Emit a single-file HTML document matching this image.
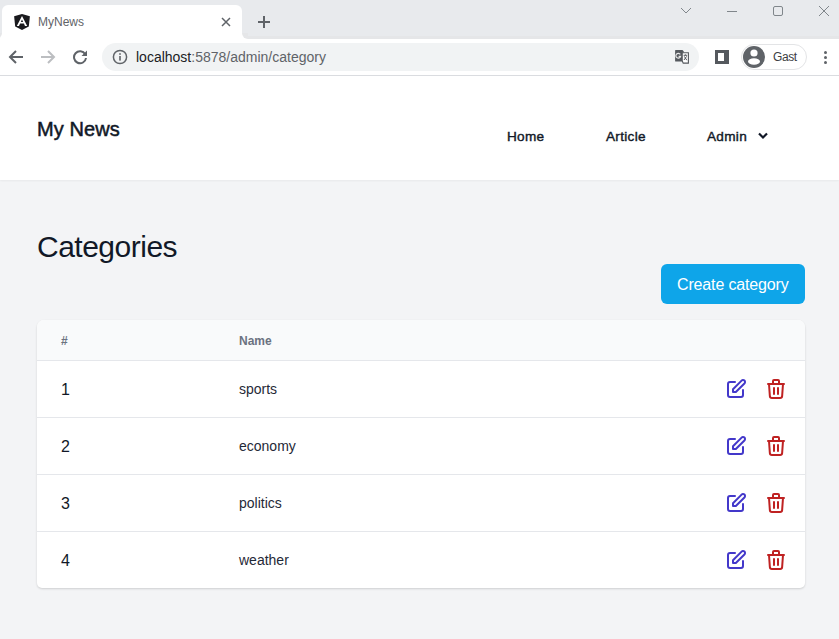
<!DOCTYPE html>
<html><head><meta charset="utf-8">
<style>
*{margin:0;padding:0;box-sizing:border-box}
html,body{width:839px;height:639px;overflow:hidden;background:#f3f4f6;font-family:"Liberation Sans",sans-serif;position:relative}
.abs{position:absolute}
#tabstrip{left:0;top:0;width:839px;height:39px;background:#e8eaed}
#tab{left:2px;top:5px;width:240px;height:34px;background:#fff;border-radius:6px 6px 0 0}
.foot{width:6px;height:6px;background:#fff;top:33px}
.foot i{position:absolute;left:0;top:0;width:6px;height:6px;background:#e5e6e8}
#toolbar{left:0;top:39px;width:839px;height:36px;background:#fff}
#tbline{left:0;top:75px;width:839px;height:1px;background:#dadce0}
#omni{left:102px;top:43px;width:597px;height:28px;border-radius:14px;background:#f1f3f4}
.t{white-space:nowrap;line-height:1}
#header{left:0;top:76px;width:839px;height:104px;background:#fff;box-shadow:0 1px 2px rgba(0,0,0,.05)}
#card{left:37px;top:320px;width:768px;height:268px;background:#fff;border-radius:7px 7px 5px 5px;box-shadow:0 1px 2px rgba(0,0,0,.1),0 1px 3px rgba(0,0,0,.06);overflow:hidden}
#thead{left:0;top:0;width:768px;height:41px;background:#f9fafb;border-bottom:1px solid #e5e7eb}
.row{left:0;width:768px;height:57px;border-top:1px solid #e5e7eb}
#btn{left:661px;top:264px;width:144px;height:40px;background:#0ea5e9;border-radius:6px}
</style></head>
<body>
<div id="tabstrip" class="abs"></div>
<div class="abs" style="left:0;top:36px;width:839px;height:3px;background:#e5e6e8"></div>
<div id="tab" class="abs"></div>
<div class="abs foot" style="left:-4px"><i style="border-radius:0 0 6px 0"></i></div>
<div class="abs foot" style="left:242px"><i style="border-radius:0 0 0 6px"></i></div>
<div id="toolbar" class="abs"></div>
<div id="tbline" class="abs"></div>
<div id="omni" class="abs"></div>

<!-- tab content -->
<svg class="abs" style="left:10px;top:10px" width="24" height="24" viewBox="0 0 24 24">
  <path d="M12 3.9L19.9 6.2L18.8 16.5L12 19.9L5.2 16.5L4.1 6.2Z" fill="#1a1a1e"/>
  <path d="M12 5.9L17.2 16.1H15L13.9 13.6H10.1L9 16.1H6.8Z M12 9.6L13.1 12.1H10.9Z" fill="#fff" fill-rule="evenodd"/>
</svg>
<div class="abs t" style="left:38px;top:16px;font-size:12px;color:#5f6368">MyNews</div>
<svg class="abs" style="left:220px;top:16px" width="12" height="12" viewBox="0 0 12 12"><path d="M2 2L10 10M10 2L2 10" stroke="#5f6368" stroke-width="1.5"/></svg>
<svg class="abs" style="left:256px;top:14px" width="16" height="16" viewBox="0 0 16 16"><path d="M8 2V14M2 8H14" stroke="#5f6368" stroke-width="2"/></svg>

<!-- window controls -->
<svg class="abs" style="left:678px;top:4px" width="16" height="14" viewBox="0 0 16 14"><path d="M3 4L8 9L13 4" stroke="#80868b" stroke-width="1" fill="none"/></svg>
<div class="abs" style="left:727px;top:11px;width:10px;height:1px;background:#80868b"></div>
<div class="abs" style="left:773px;top:6px;width:10px;height:10px;border:1px solid #80868b;border-radius:2px"></div>
<svg class="abs" style="left:818px;top:5px" width="12" height="12" viewBox="0 0 12 12"><path d="M1 1L11 11M11 1L1 11" stroke="#80868b" stroke-width="1"/></svg>

<!-- toolbar icons -->
<svg class="abs" style="left:8px;top:49px" width="16" height="16" viewBox="0 0 16 16"><path d="M15 8H2.5M8 2L2 8L8 14" stroke="#5f6368" stroke-width="2" fill="none"/></svg>
<svg class="abs" style="left:40px;top:49px" width="16" height="16" viewBox="0 0 16 16"><path d="M1 8H13.5M8 2L14 8L8 14" stroke="#bcbec1" stroke-width="2" fill="none"/></svg>
<svg class="abs" style="left:72px;top:49px" width="16" height="16" viewBox="0 0 16 16"><path d="M13.2 5.2A6 6 0 1 0 14 9" stroke="#5f6368" stroke-width="2" fill="none"/><path d="M15 1.5V7H9.5Z" fill="#5f6368"/></svg>
<svg class="abs" style="left:112px;top:49px" width="16" height="16" viewBox="0 0 16 16"><circle cx="8" cy="8" r="6.6" stroke="#5f6368" stroke-width="1.5" fill="none"/><rect x="7.2" y="7" width="1.6" height="4.6" fill="#5f6368"/><rect x="7.2" y="4.2" width="1.6" height="1.6" fill="#5f6368"/></svg>
<div class="abs t" style="left:136px;top:50px;font-size:14px;color:#202124">localhost<span style="color:#5f6368">:5878/admin/category</span></div>

<!-- translate icon -->
<svg class="abs" style="left:672px;top:47px" width="20" height="20" viewBox="0 0 20 20">
  <path d="M3.6 3.1H10.5L11.6 4.3V14.4H3.6Q3.1 14.4 3.1 13.9V3.6Q3.1 3.1 3.6 3.1Z" fill="#55595e"/>
  <path d="M10.2 5.7H16.4V16.1H11.2L10.2 13.8Z" fill="#fff" stroke="#55595e" stroke-width="1.1"/>
  <path d="M8.3 7.4A2.4 2.4 0 1 0 8.6 9.3H6.6" stroke="#e8e8e8" stroke-width="1.2" fill="none"/>
  <path d="M11.6 8.3H15.2M13.4 7.4V8.3M12.3 9.4L14.8 13.2M14.6 9.4L12 13" stroke="#55595e" stroke-width="1"/>
</svg>
<!-- sidebar icon -->
<div class="abs" style="left:715px;top:50px;width:14px;height:14px;background:#55595e"></div>
<div class="abs" style="left:718px;top:53px;width:6px;height:8px;background:#fff"></div>
<!-- profile chip -->
<div class="abs" style="left:741px;top:44px;width:66px;height:26px;border:1px solid #e3e4e6;border-radius:13px"></div>
<svg class="abs" style="left:743px;top:46px" width="22" height="22" viewBox="0 0 22 22">
  <defs><clipPath id="cc"><circle cx="11" cy="11" r="11"/></clipPath></defs>
  <circle cx="11" cy="11" r="11" fill="#5f6368"/>
  <circle cx="11" cy="7" r="3.6" fill="#fff"/>
  <ellipse cx="11" cy="15.5" rx="6" ry="3.3" fill="#fff"/>
</svg>
<div class="abs t" style="left:773px;top:51px;font-size:12px;color:#3c4043;letter-spacing:-0.4px">Gast</div>
<div class="abs" style="left:824px;top:51px;width:3px;height:3px;border-radius:50%;background:#5f6368"></div>
<div class="abs" style="left:824px;top:56px;width:3px;height:3px;border-radius:50%;background:#5f6368"></div>
<div class="abs" style="left:824px;top:61px;width:3px;height:3px;border-radius:50%;background:#5f6368"></div>

<!-- page -->
<div id="header" class="abs"></div>
<div class="abs t" style="left:37px;top:119px;font-size:20px;color:#111827;-webkit-text-stroke:0.5px #111827;letter-spacing:0.1px">My News</div>
<div class="abs t" style="left:507px;top:129.5px;font-size:13.6px;color:#111827;-webkit-text-stroke:0.4px #111827;letter-spacing:0.3px">Home</div>
<div class="abs t" style="left:606px;top:129.5px;font-size:13.6px;color:#111827;-webkit-text-stroke:0.4px #111827;letter-spacing:0.3px">Article</div>
<div class="abs t" style="left:707px;top:129.5px;font-size:13.6px;color:#111827;-webkit-text-stroke:0.4px #111827;letter-spacing:0.3px">Admin</div>
<svg class="abs" style="left:756px;top:130px" width="14" height="12" viewBox="0 0 14 12"><path d="M3 3.5L7 7.5L11 3.5" stroke="#111827" stroke-width="2.2" fill="none"/></svg>

<div class="abs t" style="left:37px;top:232px;font-size:30px;color:#111827;letter-spacing:-0.5px">Categories</div>
<div id="btn" class="abs"></div>
<div class="abs t" style="left:677px;top:277px;font-size:16px;color:#fff;letter-spacing:-0.15px">Create category</div>

<div id="card" class="abs">
  <div id="thead" class="abs"></div>
  <div class="abs t" style="left:24px;top:15px;font-size:12px;font-weight:bold;color:#6b7280">#</div>
  <div class="abs t" style="left:202px;top:15px;font-size:12px;font-weight:bold;color:#6b7280">Name</div>
  <div class="abs t" style="left:24px;top:62px;font-size:16px;color:#111827">1</div>
  <div class="abs t" style="left:202px;top:62px;font-size:14px;color:#1f2937">sports</div>
  <svg class="abs" style="left:687px;top:57px" width="24" height="24" viewBox="0 0 24 24" fill="none" stroke="#4338ca" stroke-width="2" stroke-linecap="round" stroke-linejoin="round"><path d="M11 5H6a2 2 0 00-2 2v11a2 2 0 002 2h11a2 2 0 002-2v-5m-1.414-9.414a2 2 0 112.828 2.828L11.828 15H9v-2.828l8.586-8.586z"/></svg>
  <svg class="abs" style="left:727px;top:57px" width="24" height="24" viewBox="0 0 24 24" fill="none" stroke="#bf2222" stroke-width="2" stroke-linecap="round" stroke-linejoin="round"><path d="M19 7l-.867 12.142A2 2 0 0116.138 21H7.862a2 2 0 01-1.995-1.858L5 7m5 4v6m4-6v6m1-10V4a1 1 0 00-1-1h-4a1 1 0 00-1 1v3M4 7h16"/></svg>
  <div class="abs" style="left:0;top:97px;width:768px;height:1px;background:#e5e7eb"></div>
  <div class="abs t" style="left:24px;top:119px;font-size:16px;color:#111827">2</div>
  <div class="abs t" style="left:202px;top:119px;font-size:14px;color:#1f2937">economy</div>
  <svg class="abs" style="left:687px;top:114px" width="24" height="24" viewBox="0 0 24 24" fill="none" stroke="#4338ca" stroke-width="2" stroke-linecap="round" stroke-linejoin="round"><path d="M11 5H6a2 2 0 00-2 2v11a2 2 0 002 2h11a2 2 0 002-2v-5m-1.414-9.414a2 2 0 112.828 2.828L11.828 15H9v-2.828l8.586-8.586z"/></svg>
  <svg class="abs" style="left:727px;top:114px" width="24" height="24" viewBox="0 0 24 24" fill="none" stroke="#bf2222" stroke-width="2" stroke-linecap="round" stroke-linejoin="round"><path d="M19 7l-.867 12.142A2 2 0 0116.138 21H7.862a2 2 0 01-1.995-1.858L5 7m5 4v6m4-6v6m1-10V4a1 1 0 00-1-1h-4a1 1 0 00-1 1v3M4 7h16"/></svg>
  <div class="abs" style="left:0;top:154px;width:768px;height:1px;background:#e5e7eb"></div>
  <div class="abs t" style="left:24px;top:176px;font-size:16px;color:#111827">3</div>
  <div class="abs t" style="left:202px;top:176px;font-size:14px;color:#1f2937">politics</div>
  <svg class="abs" style="left:687px;top:171px" width="24" height="24" viewBox="0 0 24 24" fill="none" stroke="#4338ca" stroke-width="2" stroke-linecap="round" stroke-linejoin="round"><path d="M11 5H6a2 2 0 00-2 2v11a2 2 0 002 2h11a2 2 0 002-2v-5m-1.414-9.414a2 2 0 112.828 2.828L11.828 15H9v-2.828l8.586-8.586z"/></svg>
  <svg class="abs" style="left:727px;top:171px" width="24" height="24" viewBox="0 0 24 24" fill="none" stroke="#bf2222" stroke-width="2" stroke-linecap="round" stroke-linejoin="round"><path d="M19 7l-.867 12.142A2 2 0 0116.138 21H7.862a2 2 0 01-1.995-1.858L5 7m5 4v6m4-6v6m1-10V4a1 1 0 00-1-1h-4a1 1 0 00-1 1v3M4 7h16"/></svg>
  <div class="abs" style="left:0;top:211px;width:768px;height:1px;background:#e5e7eb"></div>
  <div class="abs t" style="left:24px;top:233px;font-size:16px;color:#111827">4</div>
  <div class="abs t" style="left:202px;top:233px;font-size:14px;color:#1f2937">weather</div>
  <svg class="abs" style="left:687px;top:228px" width="24" height="24" viewBox="0 0 24 24" fill="none" stroke="#4338ca" stroke-width="2" stroke-linecap="round" stroke-linejoin="round"><path d="M11 5H6a2 2 0 00-2 2v11a2 2 0 002 2h11a2 2 0 002-2v-5m-1.414-9.414a2 2 0 112.828 2.828L11.828 15H9v-2.828l8.586-8.586z"/></svg>
  <svg class="abs" style="left:727px;top:228px" width="24" height="24" viewBox="0 0 24 24" fill="none" stroke="#bf2222" stroke-width="2" stroke-linecap="round" stroke-linejoin="round"><path d="M19 7l-.867 12.142A2 2 0 0116.138 21H7.862a2 2 0 01-1.995-1.858L5 7m5 4v6m4-6v6m1-10V4a1 1 0 00-1-1h-4a1 1 0 00-1 1v3M4 7h16"/></svg>
</div>
</body></html>
